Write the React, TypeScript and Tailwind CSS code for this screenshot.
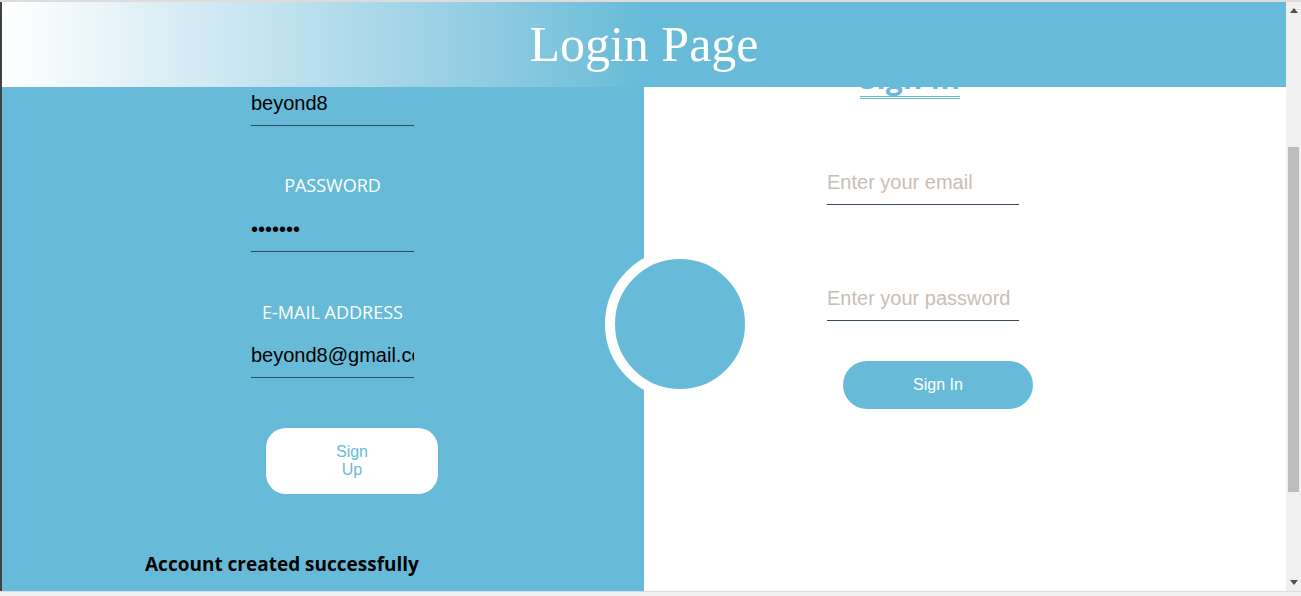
import React from 'react';

const inputCls =
  "h-[44px] border-0 border-b border-[#34495e] bg-transparent p-0 text-[20px] text-black outline-none font-['Liberation_Sans',Arial,sans-serif] placeholder:text-[#c7beb8]";

export default function App() {
  return (
    <div className="flex h-[596px] w-[1301px] flex-col overflow-hidden bg-[#f0f0f0]">
      {/* window top edge */}
      <div className="h-[2px] bg-[#dcdcdc]" />

      <div className="flex h-[589px]">
        <div className="w-[2px] bg-[#3d4242]" />

        {/* page */}
        <div className="flex w-[1284px] flex-col bg-white">
          <header className="flex h-[85px] items-center justify-center bg-linear-to-r from-white to-[#67bbd8] to-50%">
            <h1 className="font-['Liberation_Serif','Times_New_Roman',serif] text-[50px] font-normal text-white">
              Login Page
            </h1>
          </header>

          <main className="relative grid h-[504px] grid-cols-2 overflow-hidden">
            {/* Sign up side */}
            <div className="flex flex-col items-start bg-[#67bbd8] font-['Open_Sans',sans-serif]">
              <input className={`${inputCls} -mt-[5px] ml-[249px] w-[163px]`} defaultValue="beyond8" />

              <div className="mt-[47px] ml-[249px] w-[163px] text-center text-[18px] leading-[24px] text-white">
                PASSWORD
              </div>
              <input type="password" className={`${inputCls} mt-[11px] ml-[249px] w-[163px]`} defaultValue="1234567" />

              <div className="mt-[48px] ml-[249px] w-[163px] whitespace-nowrap text-center text-[18px] leading-[24px] text-white">
                E-MAIL ADDRESS
              </div>
              <input className={`${inputCls} mt-[10px] ml-[249px] w-[163px]`} defaultValue="beyond8@gmail.com" />

              <button className="mt-[50px] ml-[264px] h-[66px] w-[172px] rounded-[20px] bg-white px-[66px] font-['Liberation_Sans',Arial,sans-serif] text-[16px] leading-[18px] text-[#67bbd8]">
                Sign Up
              </button>

              <p className="mt-[57px] ml-[143px] whitespace-nowrap text-[19px] leading-[26px] font-bold text-black">
                Account created successfully
              </p>
            </div>

            {/* Sign in side */}
            <div className="flex flex-col items-start bg-white">
              <h2 className="-mt-[27px] ml-[216px] w-[100px] whitespace-nowrap border-b-[3px] border-double border-[#67bbd8] text-center font-['Open_Sans',sans-serif] text-[30px] leading-[36px] font-bold text-[#67bbd8]">
                Sign In
              </h2>

              <input className={`${inputCls} mt-[62px] ml-[183px] w-[192px]`} placeholder="Enter your email" />
              <input type="password" className={`${inputCls} mt-[72px] ml-[183px] w-[192px]`} placeholder="Enter your password" />

              <button className="mt-[40px] ml-[199px] h-[48px] w-[190px] rounded-full bg-[#67bbd8] font-['Liberation_Sans',Arial,sans-serif] text-[16px] text-white">
                Sign In
              </button>
            </div>

            {/* centre circle */}
            <div className="absolute left-[603px] top-[162px] h-[150px] w-[150px] rounded-full border-[10px] border-white bg-[#67bbd8]" />
          </main>
        </div>

        {/* scrollbar */}
        <div className="flex w-[15px] flex-col bg-[#f0f0f0] pt-[6px]">
          <svg className="mx-auto h-[5px] w-[8px]" viewBox="0 0 8 5">
            <polygon points="4,0 8,5 0,5" fill="#505050" />
          </svg>
          <div className="mt-[134px] ml-[2px] h-[345px] w-[11px] bg-[#bdbdbd]" />
          <svg className="mx-auto mt-[88px] h-[5px] w-[8px]" viewBox="0 0 8 5">
            <polygon points="0,0 8,0 4,5" fill="#505050" />
          </svg>
        </div>
      </div>

      {/* window bottom edge */}
      <div className="h-[5px] border-t border-[#dcdcdc] bg-[#f0f0f0]" />
    </div>
  );
}
